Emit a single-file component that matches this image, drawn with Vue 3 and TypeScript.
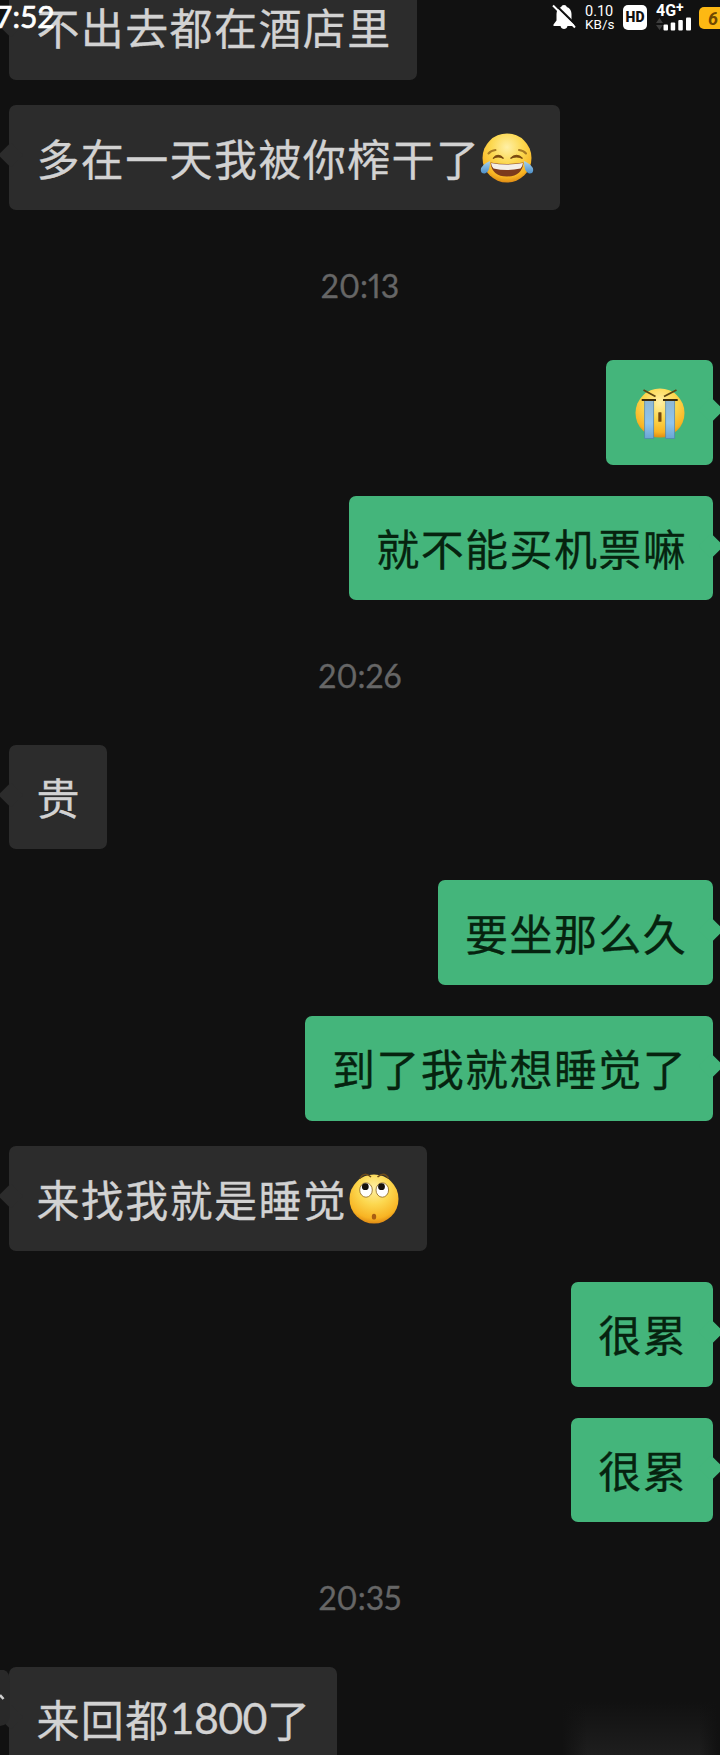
<template>
    <div class="screen">
        <header class="status-bar">
            <span class="clock">7:52</span>

            <div class="status-icons">
                <svg class="icon-bell" viewBox="0 0 24 26" width="24" height="26">
                    <path d="M12 1c1.500 0 2.500.8 2.800 2C18 4 19.500 6.800 19.500 10v6.500l3 4V22h-21v-1.500l3-4V10C4.500 6.800 6 4 9.200 3 9.500 1.800 10.500 1 12 1z" fill="#fff" />
                    <path d="M8.500 22h7c-.6 2.300-1.800 3-3.500 3S9.100 24.300 8.500 22z" fill="#fff" />
                    <path d="M2.500 0L25 22" stroke="#111" stroke-width="2.200" />
                    <path d="M1 1.500L23 23.500" stroke="#fff" stroke-width="2" />
                </svg>

                <div class="speed">
                    <span>0.10</span>
                    <span>KB/s</span>
                </div>

                <span class="hd">HD</span>

                <div class="network">
                    <span class="network-type">4G<sup>+</sup></span>
                    <svg viewBox="0 0 36 14" width="36" height="14">
                        <path d="M3.500 1L7 6H0zM3.500 13L7 8H0z" fill="#3d3d3d" />
                        <rect x="7.500" y="7.500" width="4.500" height="6" rx="1" fill="#fff" />
                        <rect x="14.700" y="5.500" width="4.500" height="8" rx="1" fill="#fff" />
                        <rect x="22.300" y="3" width="4.500" height="10.500" rx="1" fill="#fff" />
                        <rect x="30" y="0.500" width="5" height="13" rx="1" fill="#fff" />
                    </svg>
                </div>

                <span class="battery">6</span>
            </div>
        </header>

        <main class="chat">
            <template v-for="(item, index) in items" :key="index">
                <p v-if="item.kind === 'time'" class="time">{{ item.text }}</p>

                <div v-else class="row" :class="item.kind">
                    <div class="bubble">
                        <span v-if="item.text">{{ item.text }}</span>
                        <span v-if="item.amount" class="amount">{{ item.amount }}</span>
                        <span v-if="item.after">{{ item.after }}</span>

                        <svg v-if="item.emoji" class="emoji" viewBox="0 0 54 54" width="54" height="54">
                            <circle cx="27" cy="27" r="24.500" fill="url(#face)" />

                            <g v-if="item.emoji === 'joy'" fill="none" stroke="#7a4a10" stroke-width="2" stroke-linecap="round">
                                <path d="M8.500 22.500Q11 19.500 15.500 19M39 19Q43.500 19.500 46 22.500" stroke="#a87a24" />
                                <path d="M13 27.500Q18 21 23.500 27.500Q18 24.500 13 27.500zM30.500 27.500Q36.500 21 42.500 27.500Q36.500 24.500 30.500 27.500z" fill="#7a4a10" stroke-width="1.200" />
                                <path d="M10.500 31.500Q27 34.500 43.500 31.500Q42 45.500 27 45.500T10.500 31.500z" fill="#7d3a1c" stroke="none" />
                                <path d="M11 32Q27 35 43 32Q42.500 36 40.500 37.500Q27 40.500 13.500 37.500Q11.500 36 11 32z" fill="#f4efe6" stroke="none" />
                                <path d="M10 30Q1 34 .8 39Q1 43 5 42.500Q10 41 10 30zM44 30Q53 34 53.200 39Q53 43 49 42.500Q44 41 44 30z" fill="url(#drop)" stroke="none" />
                            </g>

                            <g v-else-if="item.emoji === 'cry'">
                                <path d="M10.500 4L22.500 10.500M43.500 4L31 10.500" stroke="#5d4510" stroke-width="1.800" />
                                <rect x="11.700" y="14" width="9" height="38.500" fill="url(#tears)" stroke="#4d83ad" stroke-width=".7" />
                                <rect x="32.700" y="14" width="9" height="38.500" fill="url(#tears)" stroke="#4d83ad" stroke-width=".7" />
                                <path d="M8.700 14H23M30 14H44.700" stroke="#3c2a08" stroke-width="2" />
                                <rect x="25.300" y="26.300" width="3.200" height="9.500" rx=".5" fill="#76480c" />
                            </g>

                            <g v-else>
                                <path d="M13 6.500Q17 -1 24 5M30.500 5Q37 -1 41.500 6" fill="none" stroke="#6b4a1a" stroke-width="1.500" />
                                <ellipse cx="19" cy="18" rx="6.300" ry="7.200" fill="#fff" stroke="#8a6420" stroke-width=".8" />
                                <ellipse cx="35.300" cy="18" rx="6.300" ry="7.200" fill="#fff" stroke="#8a6420" stroke-width=".8" />
                                <circle cx="18.300" cy="14.700" r="3.400" fill="#16110c" />
                                <circle cx="34.500" cy="14.700" r="3.400" fill="#16110c" />
                                <ellipse cx="27" cy="44.700" rx="2.200" ry="2.900" fill="#a85e12" />
                            </g>
                        </svg>
                    </div>
                </div>
            </template>
        </main>

        <svg class="edge-handle" viewBox="0 0 12 56" width="12" height="56">
            <path d="M0 0H4Q10 2 10 12V46Q9 55 0 56z" fill="#292929" />
            <path d="M0 25L3.500 29" stroke="#d0d0d0" stroke-width="2.500" />
        </svg>
        <div class="bottom-shade"></div>

        <!-- gradients shared by every emoji -->
        <svg class="defs" width="0" height="0">
            <defs>
                <radialGradient id="face" cx="50%" cy="28%" r="72%">
                    <stop offset="0" stop-color="#fff0a6" />
                    <stop offset=".45" stop-color="#fcd850" />
                    <stop offset=".85" stop-color="#f8b423" />
                    <stop offset="1" stop-color="#df8b15" />
                </radialGradient>
                <linearGradient id="drop" x1="0" y1="0" x2="0" y2="1">
                    <stop offset="0" stop-color="#a9d3ee" />
                    <stop offset="1" stop-color="#4b8fc9" />
                </linearGradient>
                <linearGradient id="tears" x1="0" y1="0" x2="0" y2="1">
                    <stop offset="0" stop-color="#8fb7d3" />
                    <stop offset=".6" stop-color="#8fc5ee" />
                    <stop offset="1" stop-color="#6aa5d4" />
                </linearGradient>
            </defs>
        </svg>
    </div>
</template>

<script setup lang="ts">
import { ref } from 'vue';

interface ChatItem {
    kind: 'them' | 'me' | 'time',
    text?: string,
    amount?: string,
    after?: string,
    emoji?: 'joy' | 'cry' | 'roll'
}

const items = ref<ChatItem[]>([
    { kind: 'them', text: '不出去都在酒店里' },
    { kind: 'them', text: '多在一天我被你榨干了', emoji: 'joy' },
    { kind: 'time', text: '20:13' },
    { kind: 'me', emoji: 'cry' },
    { kind: 'me', text: '就不能买机票嘛' },
    { kind: 'time', text: '20:26' },
    { kind: 'them', text: '贵' },
    { kind: 'me', text: '要坐那么久' },
    { kind: 'me', text: '到了我就想睡觉了' },
    { kind: 'them', text: '来找我就是睡觉', emoji: 'roll' },
    { kind: 'me', text: '很累' },
    { kind: 'me', text: '很累' },
    { kind: 'time', text: '20:35' },
    { kind: 'them', text: '来回都', amount: '1800', after: '了' }
]);
</script>

<style>
body {
    background: #111;
}
</style>

<style scoped>
.screen {
    position: relative;
    width: 720px;
    height: 1755px;
    overflow: hidden;
    background: #111;
    font-family: "Noto Sans CJK SC", sans-serif;
}

.status-bar {
    position: absolute;
    z-index: 2;
    top: 0;
    left: 0;
    width: 731px;
    height: 34px;
    display: flex;
    justify-content: space-between;
    color: #fff;
}

.clock {
    margin-left: -5px;
    font: 400 30px/33px Lato, sans-serif;
    -webkit-text-stroke: 0.7px #fff;
}

.status-icons {
    display: flex;
    align-items: center;
}

.icon-bell {
    margin-right: 9px;
}

.speed {
    display: flex;
    flex-direction: column;
    width: 29px;
    margin-right: 9px;
    padding-top: 1px;
    font: 400 13.500px/13px Roboto, sans-serif;
}

.speed span:first-child {
    font-size: 14.500px;
}

.hd {
    width: 24px;
    height: 25px;
    margin-right: 9px;
    border-radius: 5px;
    background: #fff;
    color: #111;
    font: 900 14px/25px Roboto, sans-serif;
    text-align: center;
}

.network {
    display: flex;
    flex-direction: column;
    width: 36px;
    margin-right: 7px;
    padding-top: 1px;
}

.network-type {
    font: 700 16px/12px Roboto, sans-serif;
    white-space: nowrap;
}

.network-type sup {
    font-size: 14px;
    line-height: 0;
    vertical-align: 4px;
}

.battery {
    width: 32px;
    height: 22px;
    margin-top: 2px;
    padding-left: 9px;
    box-sizing: border-box;
    border-radius: 5px;
    background: #fdb813;
    color: #704700;
    font: italic 700 18px/23px Roboto, sans-serif;
}

.chat {
    display: flex;
    flex-direction: column;
    margin-top: -25px;
}

.row {
    display: flex;
    padding: 0 7px 0 9.300px;
}

.row.them {
    margin-top: 25.500px;
}

.row.me {
    margin-top: 31px;
    justify-content: flex-end;
}

.row:first-child {
    margin-top: 0;
}

.bubble {
    position: relative;
    display: flex;
    align-items: center;
    height: 104.700px;
    padding: 0 25.900px 0 27.100px;
    box-sizing: border-box;
    border-radius: 7px;
    font-size: 43px;
    line-height: 60px;
    letter-spacing: 1.400px;
    white-space: nowrap;
}

.bubble span {
    padding-bottom: 2px;
    -webkit-text-stroke: 0.3px currentColor;
}

.them .bubble {
    background: #2c2c2c;
    color: #d2d2d2;
}

.me .bubble {
    background: #44b57b;
    color: #06230f;
}

.bubble::after {
    content: '';
    position: absolute;
    top: 41px;
    width: 18px;
    height: 18px;
    border-radius: 2px;
    background: inherit;
    transform: rotate(45deg);
}

.them .bubble::after {
    left: -7px;
}

.me .bubble::after {
    right: -7px;
}

.bubble .amount {
    font-family: Lato, sans-serif;
    letter-spacing: -0.600px;
}

.emoji {
    flex: none;
    overflow: visible;
}

.me .emoji {
    margin-top: 2px;
}

.time {
    height: 119px;
    margin: 0;
    padding-top: 59px;
    box-sizing: border-box;
    color: #666;
    font: 400 32px/33px Lato, sans-serif;
    font-variant-numeric: proportional-nums;
    text-align: center;
    -webkit-text-stroke: 0.3px #666;
}

.edge-handle {
    position: absolute;
    left: 0;
    top: 1670px;
}

.bottom-shade {
    position: absolute;
    left: 562px;
    bottom: 0;
    width: 156px;
    height: 53px;
    background: linear-gradient(90deg, #111, transparent 16%, transparent 88%, #111), linear-gradient(#111, #1e1e1e);
}

.defs {
    position: absolute;
}
</style>
